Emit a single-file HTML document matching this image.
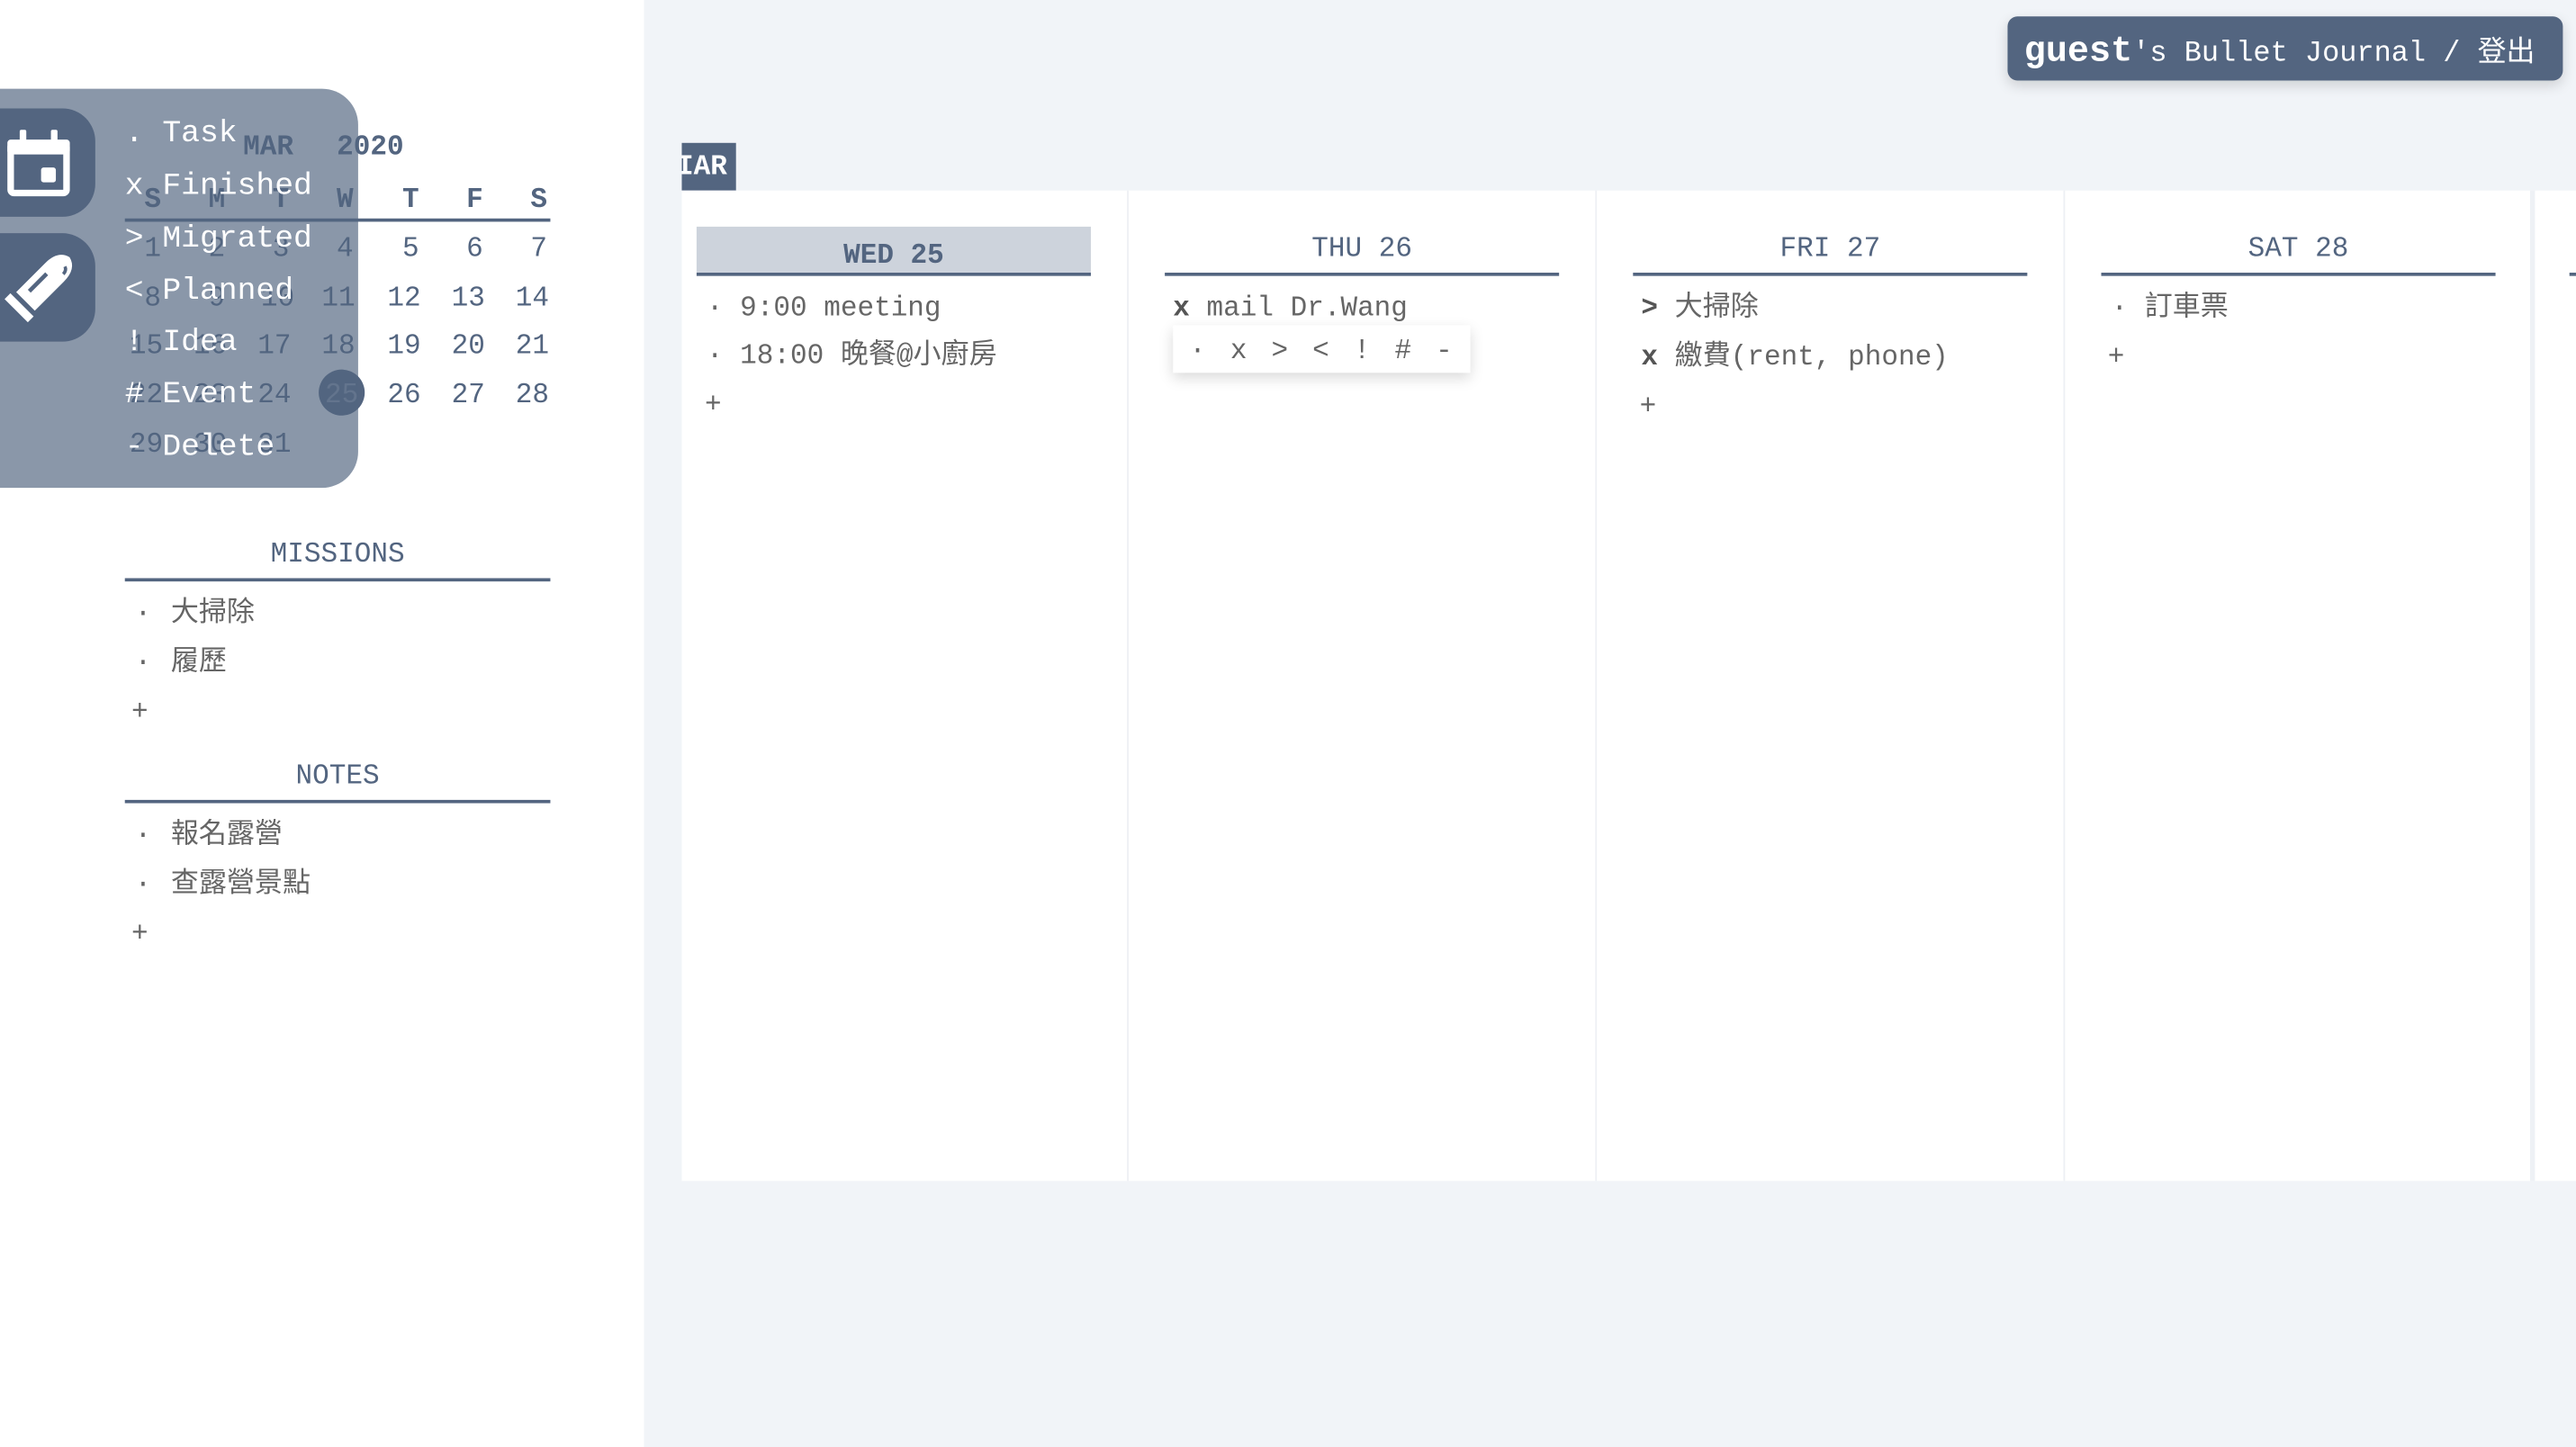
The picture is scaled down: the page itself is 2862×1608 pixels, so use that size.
<!DOCTYPE html>
<html><head><meta charset="utf-8"><style>
html,body{margin:0;padding:0;}
body{width:2862px;height:1608px;overflow:hidden;background:#f1f4f8;}
#w{position:absolute;left:0;top:0;width:1568px;height:881px;transform:scale(1.82526);transform-origin:0 0;font-family:"Liberation Mono","Noto Sans CJK TC",monospace;}
.a{position:absolute;white-space:nowrap;line-height:24px;transform:translateY(3px);}
.side{position:absolute;left:0;top:0;width:392px;height:881px;background:#fff;}
.dk{color:#536580;}
.g{color:#666;}
.ln{position:absolute;height:2px;background:#536580;}
.c{text-align:center;width:30px;margin-left:-15px;}
</style></head><body><div id="w">
<div class="side"></div>

<!-- calendar -->
<div class="a dk" style="left:148px;top:76px;font-size:17px;font-weight:bold">MAR</div>
<div class="a dk" style="left:205px;top:76px;font-size:17px;font-weight:bold">2020</div>
<div class="a dk c" style="left:93px;top:108px;font-size:17px;font-weight:bold">S</div>
<div class="a dk c" style="left:132px;top:108px;font-size:17px;font-weight:bold">M</div>
<div class="a dk c" style="left:171px;top:108px;font-size:17px;font-weight:bold">T</div>
<div class="a dk c" style="left:210px;top:108px;font-size:17px;font-weight:bold">W</div>
<div class="a dk c" style="left:250px;top:108px;font-size:17px;font-weight:bold">T</div>
<div class="a dk c" style="left:289px;top:108px;font-size:17px;font-weight:bold">F</div>
<div class="a dk c" style="left:328px;top:108px;font-size:17px;font-weight:bold">S</div>
<div class="ln" style="left:76px;top:133px;width:259px"></div>
<div style="position:absolute;left:194px;top:225px;width:28px;height:28px;border-radius:50%;background:#536580"></div>
<div class="dk" style="font-size:17px">
<div class="a c" style="left:93px;top:138px">1</div><div class="a c" style="left:132px;top:138px">2</div><div class="a c" style="left:171px;top:138px">3</div><div class="a c" style="left:210px;top:138px">4</div><div class="a c" style="left:250px;top:138px">5</div><div class="a c" style="left:289px;top:138px">6</div><div class="a c" style="left:328px;top:138px">7</div>
<div class="a c" style="left:93px;top:168px">8</div><div class="a c" style="left:132px;top:168px">9</div><div class="a c" style="left:169px;top:168px">10</div><div class="a c" style="left:206px;top:168px">11</div><div class="a c" style="left:246px;top:168px">12</div><div class="a c" style="left:285px;top:168px">13</div><div class="a c" style="left:324px;top:168px">14</div>
<div class="a c" style="left:89px;top:197px">15</div><div class="a c" style="left:128px;top:197px">16</div><div class="a c" style="left:167px;top:197px">17</div><div class="a c" style="left:206px;top:197px">18</div><div class="a c" style="left:246px;top:197px">19</div><div class="a c" style="left:285px;top:197px">20</div><div class="a c" style="left:324px;top:197px">21</div>
<div class="a c" style="left:89px;top:227px">22</div><div class="a c" style="left:128px;top:227px">23</div><div class="a c" style="left:167px;top:227px">24</div><div class="a c" style="left:208px;top:227px;color:#8694a8">25</div><div class="a c" style="left:246px;top:227px">26</div><div class="a c" style="left:285px;top:227px">27</div><div class="a c" style="left:324px;top:227px">28</div>
<div class="a c" style="left:89px;top:257px">29</div><div class="a c" style="left:128px;top:257px">30</div><div class="a c" style="left:167px;top:257px">31</div>
</div>

<!-- overlay panel -->
<div style="position:absolute;left:0;top:54px;width:218px;height:243px;background:rgba(83,101,128,0.68);border-radius:0 22px 22px 0"></div>
<div style="position:absolute;left:0;top:66px;width:58px;height:66px;background:#536580;border-radius:0 20px 20px 0"></div>
<div style="position:absolute;left:0;top:142px;width:58px;height:66px;background:#536580;border-radius:0 20px 20px 0"></div>
<svg style="position:absolute;left:0;top:66px" width="58" height="66" viewBox="0 0 58 66">
<rect x="6.5" y="21.5" width="34" height="30" rx="2" fill="none" stroke="#fff" stroke-width="4"/>
<rect x="4.5" y="19" width="38" height="9" rx="2" fill="#fff"/>
<rect x="12" y="13" width="4" height="8" rx="1" fill="#fff"/><rect x="31" y="13" width="4" height="8" rx="1" fill="#fff"/>
<rect x="25" y="36" width="9" height="9" rx="1.5" fill="#fff"/>
</svg>
<svg style="position:absolute;left:0;top:142px" width="58" height="66" viewBox="0 0 58 66">
<g transform="rotate(45 24 33)">
<path d="M16 20 L32 20 L32 45 L16 45 Z M16 20 Q16 9 24 7 Q32 9 32 20" fill="#fff"/>
<rect x="14" y="48" width="20" height="5" fill="#fff"/>
<rect x="20" y="24" width="2.5" height="15" fill="#536580"/>
<path d="M26 13 Q28.5 14 28.5 17" stroke="#536580" stroke-width="2" fill="none"/>
</g>
</svg>
<div style="color:#fff;font-size:19px">
<div class="a" style="left:76px;top:66px">. Task</div>
<div class="a" style="left:76px;top:98px">x Finished</div>
<div class="a" style="left:76px;top:130px">&gt; Migrated</div>
<div class="a" style="left:76px;top:162px">&lt; Planned</div>
<div class="a" style="left:76px;top:193px">! Idea</div>
<div class="a" style="left:76px;top:225px"># Event</div>
<div class="a" style="left:76px;top:257px">- Delete</div>
</div>

<!-- missions / notes -->
<div class="a dk" style="left:76px;width:259px;text-align:center;top:324px;font-size:17px">MISSIONS</div>
<div class="ln" style="left:76px;top:352px;width:259px"></div>
<div class="a g" style="left:82px;top:360px;font-size:17px">·</div><div class="a g" style="left:104px;top:360px;font-size:17px">大掃除</div>
<div class="a g" style="left:82px;top:390px;font-size:17px">·</div><div class="a g" style="left:104px;top:390px;font-size:17px">履歷</div>
<div class="a g" style="left:80px;top:420px;font-size:17px">+</div>
<div class="a dk" style="left:76px;width:259px;text-align:center;top:459px;font-size:17px">NOTES</div>
<div class="ln" style="left:76px;top:487px;width:259px"></div>
<div class="a g" style="left:82px;top:495px;font-size:17px">·</div><div class="a g" style="left:104px;top:495px;font-size:17px">報名露營</div>
<div class="a g" style="left:82px;top:525px;font-size:17px">·</div><div class="a g" style="left:104px;top:525px;font-size:17px">查露營景點</div>
<div class="a g" style="left:80px;top:555px;font-size:17px">+</div>

<!-- main -->
<div style="position:absolute;left:415px;top:87px;width:33px;height:29px;background:#536580;color:#fff;font-size:17px;font-weight:bold;line-height:31px;overflow:hidden;text-indent:-3px">IAR</div>
<div style="position:absolute;left:415px;top:116px;width:1153px;height:603px;background:#fff"></div>
<div style="position:absolute;left:686px;top:116px;width:1px;height:603px;background:#eef0f4"></div>
<div style="position:absolute;left:971px;top:116px;width:1px;height:603px;background:#eef0f4"></div>
<div style="position:absolute;left:1256px;top:116px;width:1px;height:603px;background:#eef0f4"></div>
<div style="position:absolute;left:1540px;top:116px;width:3px;height:603px;background:#eef1f5"></div>

<div style="position:absolute;left:424px;top:138px;width:240px;height:28px;background:#cdd3dc"></div>
<div class="a dk" style="left:424px;width:240px;text-align:center;top:142px;font-size:17px;font-weight:bold">WED 25</div>
<div class="ln" style="left:424px;top:166px;width:240px"></div>
<div class="a dk" style="left:709px;width:240px;text-align:center;top:138px;font-size:17px">THU 26</div>
<div class="ln" style="left:709px;top:166px;width:240px"></div>
<div class="a dk" style="left:994px;width:240px;text-align:center;top:138px;font-size:17px">FRI 27</div>
<div class="ln" style="left:994px;top:166px;width:240px"></div>
<div class="a dk" style="left:1279px;width:240px;text-align:center;top:138px;font-size:17px">SAT 28</div>
<div class="ln" style="left:1279px;top:166px;width:240px"></div>
<div class="ln" style="left:1564px;top:166px;width:4px"></div>

<div class="a g" style="left:430px;top:174px;font-size:17px">· 9:00 meeting</div>
<div class="a g" style="left:430px;top:203px;font-size:17px">· 18:00 晚餐@小廚房</div>
<div class="a g" style="left:429px;top:233px;font-size:17px">+</div>

<div class="a g" style="left:714px;top:174px;font-size:17px"><b style="color:#555">x</b> mail Dr.Wang</div>
<div style="position:absolute;left:714px;top:198px;width:181px;height:29px;background:#fff;box-shadow:0 3px 8px rgba(0,0,0,0.15)"></div>
<div class="g" style="font-size:17px">
<div class="a c" style="left:729px;top:200px">·</div>
<div class="a c" style="left:754px;top:200px">x</div>
<div class="a c" style="left:779px;top:200px">&gt;</div>
<div class="a c" style="left:804px;top:200px">&lt;</div>
<div class="a c" style="left:829px;top:200px">!</div>
<div class="a c" style="left:854px;top:200px">#</div>
<div class="a c" style="left:879px;top:200px">-</div>
</div>

<div class="a g" style="left:999px;top:174px;font-size:17px"><b style="color:#555">&gt;</b> 大掃除</div>
<div class="a g" style="left:999px;top:204px;font-size:17px"><b style="color:#555">x</b> 繳費(rent, phone)</div>
<div class="a g" style="left:998px;top:234px;font-size:17px">+</div>

<div class="a g" style="left:1285px;top:174px;font-size:17px">· 訂車票</div>
<div class="a g" style="left:1283px;top:204px;font-size:17px">+</div>

<!-- top right -->
<div style="position:absolute;left:1222px;top:10px;width:338px;height:39px;background:#536580;border-radius:6px;box-shadow:0 3px 8px rgba(0,0,0,0.15);color:#fff;font-size:17.5px;line-height:43px;text-indent:10px;white-space:nowrap"><b style="font-size:22px">guest</b>'s Bullet Journal / 登出</div>
</div></body></html>
